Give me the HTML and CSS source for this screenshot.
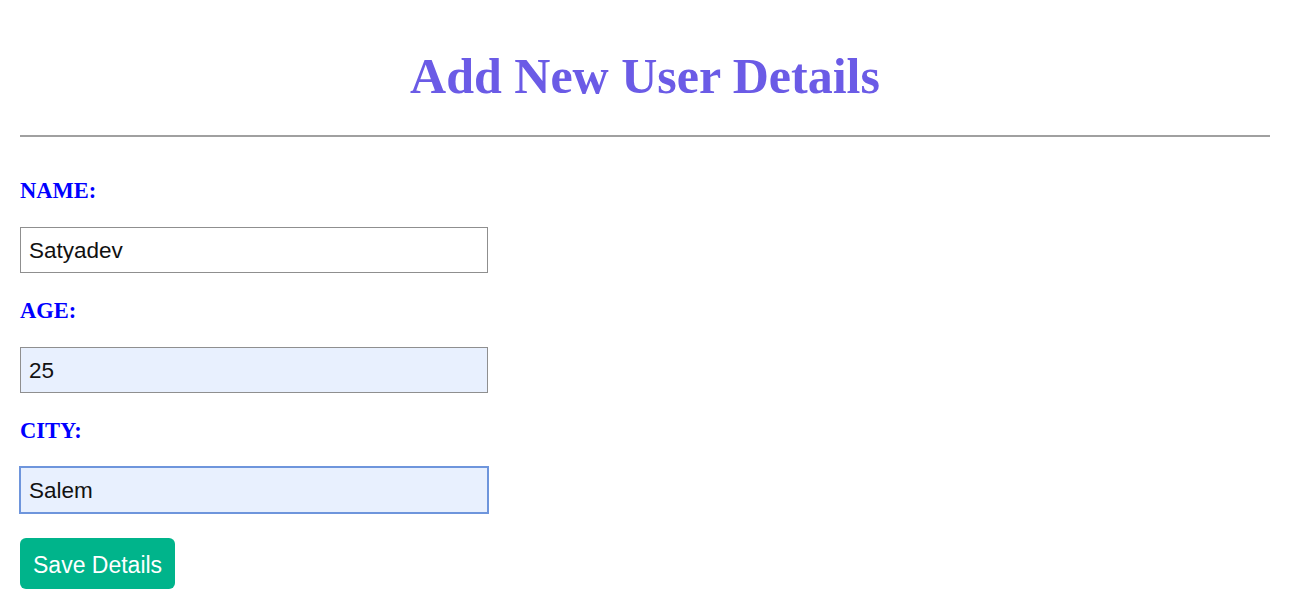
FILE: index.html
```html
<!DOCTYPE html>
<html lang="en">
<head>
<meta charset="utf-8">
<title>Add New User Details</title>
<link rel="stylesheet" href="styles.css">
</head>
<body>
<h1 class="title">Add New User Details</h1>
<hr class="rule">
<form class="user-form">
  <div class="field">
    <label class="field-label" for="name">NAME:</label>
    <input class="field-input" id="name" type="text" value="Satyadev">
  </div>
  <div class="field">
    <label class="field-label" for="age">AGE:</label>
    <input class="field-input field-input--filled" id="age" type="text" value="25">
  </div>
  <div class="field">
    <label class="field-label" for="city">CITY:</label>
    <input class="field-input field-input--filled field-input--focus" id="city" type="text" value="Salem">
  </div>
  <button class="save-btn" type="button">Save Details</button>
</form>
</body>
</html>
```
FILE: styles.css
```css
html, body {
  margin: 0;
  padding: 0;
  background: #ffffff;
}

body {
  padding: 0 21px 0 20px;
  font-family: "Liberation Serif", "Times New Roman", serif;
}

.title {
  margin: 48px 0 0;
  font-size: 50px;
  line-height: 56px;
  font-weight: bold;
  text-align: center;
  color: #6b5be6;
}

.rule {
  margin: 31px 0 0;
  height: 2px;
  border: none;
  background: #a0a0a0;
}

.user-form {
  display: flex;
  flex-direction: column;
  align-items: flex-start;
  margin-top: 41px;
}

.field {
  display: flex;
  flex-direction: column;
  align-items: flex-start;
  gap: 23px;
  margin-bottom: 25px;
}

.field-label {
  font-family: "Liberation Serif", "Times New Roman", serif;
  font-size: 22.5px;
  line-height: 26px;
  font-weight: bold;
  color: #0000ff;
}

.field-input {
  box-sizing: border-box;
  width: 468px;
  height: 46px;
  margin: 0;
  padding: 2px 8px 0;
  border: 1px solid #8f8f8f;
  border-radius: 0;
  background: #ffffff;
  font-family: "Liberation Sans", Arial, sans-serif;
  font-size: 22.5px;
  color: #111111;
  outline: none;
}

.field-input--filled {
  background: #e8f0fe;
}

.field-input--focus {
  border-color: #6e95dc;
  box-shadow: 0 0 0 1px #6e95dc;
}

.save-btn {
  box-sizing: border-box;
  height: 51px;
  padding: 3px 13px 0;
  border: none;
  border-radius: 6px;
  background: #00b48b;
  color: #ffffff;
  font-family: "Liberation Sans", Arial, sans-serif;
  font-size: 23px;
  cursor: pointer;
}
```
